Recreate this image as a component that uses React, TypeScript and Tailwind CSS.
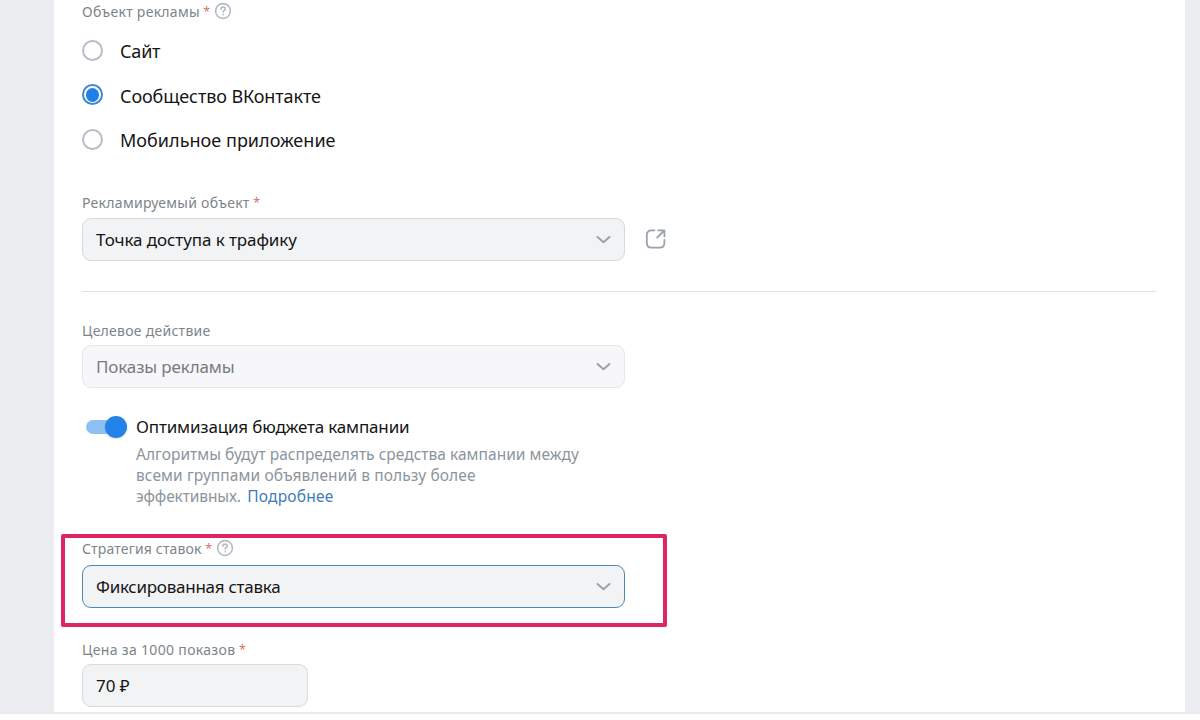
import type { ReactNode } from "react";

function Chevron({ className }: { className: string }) {
  return (
    <svg width="16" height="10" viewBox="0 0 16 10" fill="none" stroke="currentColor" strokeWidth="2" strokeLinecap="round" strokeLinejoin="round" className={className}>
      <path d="M2.500 2 8.500 7.300l6-5.300" />
    </svg>
  );
}

function Help() {
  return (
    <svg width="18" height="18" viewBox="0 0 18 18" fill="none" stroke="#b4bac4" strokeWidth="1.6" strokeLinecap="round" className="shrink-0">
      <circle cx="9" cy="9" r="7.400" />
      <path d="M6.900 7.300C6.900 5.900 7.800 5.100 9 5.100s2.200.8 2.200 1.900c0 1.600-2.100 1.600-2.100 3.100" />
      <circle cx="9.100" cy="12.700" r=".5" fill="#b4bac4" strokeWidth=".8" />
    </svg>
  );
}

type LabelProps = { children: ReactNode; required?: boolean; help?: boolean; className?: string };

function Label({ children, required, help, className = "" }: LabelProps) {
  return (
    <div className={`flex h-5 items-center whitespace-nowrap text-[14px] leading-5 text-[#7b858b] ${className}`}>
      <span>{children}</span>
      {required && <span className="ml-[3.5px] w-[7px] text-[12.5px] tracking-normal text-[#d9706b]">*</span>}
      {help && <span className="-mt-0.5 ml-[3.4px]"><Help /></span>}
    </div>
  );
}

function Radio({ children, checked, className = "" }: { children: ReactNode; checked?: boolean; className?: string }) {
  return (
    <label className="flex h-[44.5px] items-center">
      <span className={`flex size-[21px] shrink-0 items-center justify-center rounded-full border-2 ${checked ? "border-[#3f8ac6]" : "border-[#b8bec8]"}`}>
        {checked && <span className="size-[13.5px] rounded-full bg-[#1f80ea]" />}
      </span>
      <span className={`ml-[17px] mt-[2px] whitespace-nowrap text-[18px] leading-6 text-[#151515] ${className}`}>{children}</span>
    </label>
  );
}

function Select({ children, className }: { children: ReactNode; className: string }) {
  return (
    <div className={`flex h-[43px] w-[543px] items-center justify-between rounded-[9px] border pl-[13px] pr-[13px] ${className}`}>
      <span className="mt-0.5 whitespace-nowrap text-[17px]">{children}</span>
      <Chevron className="mt-0.5 text-[#99a2ad]" />
    </div>
  );
}

export default function App() {
  return (
    <div className="h-[720px] w-[1200px] overflow-hidden bg-white font-['Noto_Sans','Open_Sans',sans-serif]">
      <div className="flex h-[714px] border-b-2 border-[#e9eaec] bg-[#ebedf1] pl-[54px] pr-[15px]">
        <main className="relative flex-1 bg-white pl-7 pr-[29px] pt-0.5">
          <Label required help className="tracking-[0.28px]">Объект рекламы</Label>
          <div className="mt-1.5">
            <Radio className="tracking-[-0.2px]">Сайт</Radio>
            <Radio checked className="tracking-[-0.1px]">Сообщество ВКонтакте</Radio>
            <Radio className="tracking-[0.03px]">Мобильное приложение</Radio>
          </div>
          <Label required className="mt-[31px] tracking-[0.28px]">Рекламируемый объект</Label>
          <div className="mt-[5px] flex items-center">
            <Select className="border-[#d7dade] bg-[#f2f3f5] tracking-[-0.08px] text-[#151515]">Точка доступа к трафику</Select>
            <svg width="24" height="24" viewBox="0 0 24 24" fill="none" stroke="#99a2ad" strokeWidth="1.8" strokeLinecap="round" strokeLinejoin="round" className="ml-[19px]">
              <path d="M10.500 3.300H7.500C4.500 3.300 2.800 5 2.800 8v8c0 3 1.700 4.700 4.700 4.700h8.200c3 0 4.700-1.700 4.700-4.700v-3M14.200 3.300h6.200v6.200M20.100 3.600 13.200 10.500" />
            </svg>
          </div>
          <hr className="mt-[30px] border-[#e1e2e5]" />
          <Label className="mt-[29px] tracking-[0.27px]">Целевое действие</Label>
          <Select className="mt-[4px] border-[#e6e7e9] bg-[#f7f7f9] tracking-[-0.14px] text-[#777b80]">Показы рекламы</Select>
          <div className="mt-[26px] flex pl-1">
            <div className="mt-1.5 flex h-[14px] w-[41px] items-center justify-end rounded-full bg-[#8fc0f4]">
              <span className="size-[22px] rounded-full bg-[#2483e8] shadow-sm" />
            </div>
            <div className="ml-[9px]">
              <div className="h-[30px] whitespace-nowrap text-[17px] leading-[26px] tracking-[-0.17px] text-[#151515]">Оптимизация бюджета кампании</div>
              <div className="whitespace-nowrap text-[15.5px] leading-[21px] text-[#8b959e]">
                <div className="tracking-[0.03px]">Алгоритмы будут распределять средства кампании между</div>
                <div className="tracking-[0.1px]">всеми группами объявлений в пользу более</div>
                <div className="flex gap-[6.5px]">
                  <span className="tracking-[-0.12px]">эффективных.</span>
                  <a className="tracking-[0.2px] text-[#3f7db8]">Подробнее</a>
                </div>
              </div>
            </div>
          </div>
          <Label required help className="mt-[32px] tracking-[0.16px]">Стратегия ставок</Label>
          <Select className="mt-[6px] border-[#4d89b5] bg-[#f2f3f5] tracking-[-0.26px] text-[#151515]">Фиксированная ставка</Select>
          <Label required className="mt-[32px] tracking-[0.33px]">Цена за 1000 показов</Label>
          <div className="mt-1 flex h-[43px] w-[226px] items-center rounded-[9px] border border-[#d7dade] bg-[#f2f3f5] pl-[13px] text-[17px] text-[#151515]">
            <span className="mt-0.5">70 ₽</span>
          </div>
          <div className="absolute left-[7px] top-[534px] h-[93px] w-[606px] rounded-[2px] border-4 border-[#de2465]" />
        </main>
      </div>
    </div>
  );
}
